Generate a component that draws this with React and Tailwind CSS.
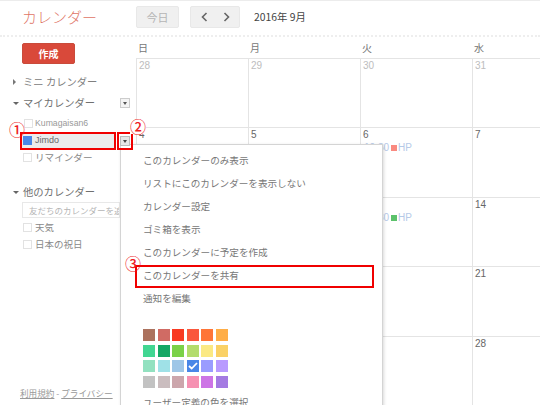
function Cell({ n, dim, children }) {
  return (
    <div className={`border-t border-l border-[#e4e4e4] pl-[2px] text-[10px] leading-[14px] font-['Liberation_Sans',sans-serif] ${dim ? "text-[#bdbdbd]" : "text-[#666]"}`}>
      {n}
      {children}
    </div>
  );
}

function Event({ color, time }) {
  return (
    <div className="flex items-center text-[10px] leading-[12px] text-[#b5c9e8] pl-[1px]">
      <span className="w-[27px]">{time}</span>
      <span className={`w-[6px] h-[6px] mr-[1px] ${color}`} />
      <span>HP</span>
    </div>
  );
}

function Box() {
  return <span className="w-[9px] h-[9px] border border-[#e2e2e2] shrink-0" />;
}

function Num({ n, className }) {
  return (
    <span className={`absolute text-[#ee1c25] text-[16px] leading-[15px] font-medium font-['Noto_Sans_CJK_JP',sans-serif] ${className}`}>{n}</span>
  );
}

const swatches = [
  ["bg-[#ac725e]", "bg-[#d06b64]", "bg-[#f83a22]", "bg-[#fa573c]", "bg-[#ff7537]", "bg-[#ffad46]"],
  ["bg-[#42d692]", "bg-[#16a765]", "bg-[#7bd148]", "bg-[#b3dc6c]", "bg-[#fbe983]", "bg-[#fad165]"],
  ["bg-[#92e1c0]", "bg-[#9fe1e7]", "bg-[#9fc6e7]", "bg-[#4986e7]", "bg-[#9a9cff]", "bg-[#b99aff]"],
  ["bg-[#c2c2c2]", "bg-[#cabdbf]", "bg-[#cca6ac]", "bg-[#f691b2]", "bg-[#cd74e6]", "bg-[#a47ae2]"],
];

const menu = ["このカレンダーのみ表示", "リストにこのカレンダーを表示しない", "カレンダー設定", "ゴミ箱を表示", "このカレンダーに予定を作成", "このカレンダーを共有", "通知を編集"];

export default function App() {
  return (
    <div className="relative w-[540px] h-[405px] overflow-hidden bg-white font-['Noto_Sans_CJK_JP','Liberation_Sans',sans-serif] text-[#777]">
      {/* header */}
      <div className="flex items-center h-[37px] border-t border-t-[#ececec] border-b-2 border-b-[#eeeeee] [border-bottom-style:dotted]">
        <div className="w-[136px] pl-[22px] text-[#e07566] text-[15px] font-light leading-[20px] -mt-[2px]">カレンダー</div>
        <div className="w-[43px] h-[22px] bg-[#f0f0f0] border border-[#e8e8e8] rounded-[2px] text-[#b5b5b5] text-[11px] flex items-center justify-center -mt-[2px]">今日</div>
        <div className="w-[50px] h-[22px] ml-[11px] bg-[#f0f0f0] border border-[#e8e8e8] rounded-[2px] flex items-center justify-center gap-[15px] -mt-[2px]">
          <svg width="7" height="10" viewBox="0 0 7 10" fill="none" stroke="#666" strokeWidth="1.6"><path d="M5.5 1 1.5 5l4 4" /></svg>
          <svg width="7" height="10" viewBox="0 0 7 10" fill="none" stroke="#666" strokeWidth="1.6"><path d="M1.5 1l4 4-4 4" /></svg>
        </div>
        <div className="ml-[14px] text-[10.4px] text-[#444] -mt-[2px]">2016年 9月</div>
      </div>

      <div className="flex h-[368px]">
        {/* sidebar */}
        <div className="relative w-[136px] shrink-0 text-[10.3px] leading-[16px]">
          <div className="ml-[22px] mt-[6px] w-[53px] h-[21px] bg-[#d9493a] border border-[#c94b3b] rounded-[2px] text-white text-[10px] font-bold flex items-center justify-center">作成</div>
          <div className="flex items-center mt-[10px] ml-[13px] text-[#808080]">
            <span className="w-0 h-0 border-y-[3px] border-y-transparent border-l-[3px] border-l-[#777] mr-[7px]" />ミニ カレンダー
          </div>
          <div className="flex items-center mt-[5px] ml-[13px] w-[117px] text-[#707070]">
            <span className="w-0 h-0 border-x-[3px] border-x-transparent border-t-[3px] border-t-[#666] mr-[4px]" />マイカレンダー
            <span className="ml-auto w-[10px] h-[10px] border border-[#ccc] bg-[#f4f4f4] flex items-center justify-center">
              <span className="w-0 h-0 border-x-[2.5px] border-x-transparent border-t-[3px] border-t-[#555]" />
            </span>
          </div>
          <div className="flex items-center gap-[2px] mt-[4px] ml-[24px] text-[8.7px] text-[#999] h-[16px] font-['Liberation_Sans',sans-serif]"><Box />Kumagaisan6</div>
          <div className="flex items-center gap-[3px] mt-[1px] ml-[21px] pl-[2px] w-[93px] h-[16px] bg-[#ececec] text-[9px] text-[#666] font-['Liberation_Sans',sans-serif]">
            <span className="w-[9px] h-[9px] bg-[#4986e7] shrink-0" />Jimdo
          </div>
          <div className="flex items-center gap-[3px] mt-[1px] ml-[23px] text-[9.6px] text-[#888] h-[16px]"><Box />リマインダー</div>
          <div className="flex items-center mt-[19px] ml-[13px] text-[#707070]">
            <span className="w-0 h-0 border-x-[3px] border-x-transparent border-t-[3px] border-t-[#666] mr-[4px]" />他のカレンダー
          </div>
          <div className="ml-[22px] mt-[2px] w-[98px] h-[16px] border border-[#e8e8e8] overflow-hidden whitespace-nowrap pl-[6px] text-[8.5px] leading-[14px] text-[#b5b5b5]">友だちのカレンダーを追加</div>
          <div className="flex items-center gap-[3px] mt-[1px] ml-[23px] text-[9.5px] text-[#888] h-[16px]"><Box />天気</div>
          <div className="flex items-center gap-[3px] mt-[1px] ml-[23px] text-[9.5px] text-[#888] h-[16px]"><Box />日本の祝日</div>
          <div className="absolute left-[20px] top-[350px] text-[8.6px] leading-[12px] text-[#999] whitespace-nowrap">
            <span className="underline">利用規約</span> - <span className="underline">プライバシー</span>
          </div>
        </div>

        {/* calendar */}
        <div className="flex-1 min-w-0 flex flex-col">
          <div className="grid grid-cols-[112px_112px_112px_68px] h-[21px] text-[10px] leading-[14px] text-[#777] pl-[2px] pt-[4px]">
            <span>日</span><span>月</span><span>火</span><span>水</span>
          </div>
          <div className="grid grid-cols-[112px_112px_112px_68px] grid-rows-[69.5px_69.5px_69.5px_69.5px_69.5px]">
            <Cell n="28" dim /><Cell n="29" dim /><Cell n="30" dim /><Cell n="31" dim />
            <Cell n="4" /><Cell n="5" /><Cell n="6"><Event color="bg-[#fa8a80]" time="10:30" /></Cell><Cell n="7" />
            <Cell n="11" /><Cell n="12" /><Cell n="13"><Event color="bg-[#5cc26b]" time="10:30" /></Cell><Cell n="14" />
            <Cell n="18" /><Cell n="19" /><Cell n="20" /><Cell n="21" />
            <Cell n="25" /><Cell n="26" /><Cell n="27" /><Cell n="28" />
          </div>
        </div>
      </div>

      {/* popup menu */}
      <div className="absolute left-[120px] top-[144px] w-[263px] h-[280px] bg-white border border-[#d4d4d4] shadow-[1px_1px_3px_rgba(0,0,0,0.15)] pt-[6px] text-[9.6px] text-[#777]">
        {menu.map((m) => (
          <div key={m} className="h-[23px] leading-[19px] pl-[22px] whitespace-nowrap">{m}</div>
        ))}
        <div className="mt-[17px] ml-[22px] grid grid-cols-[repeat(6,12px)] gap-x-[2.5px] gap-y-[3.7px]">
          {swatches.flat().map((c) => (
            <span key={c} className={`w-[12px] h-[12px] flex items-center justify-center ${c}`}>
              {c === "bg-[#4986e7]" && (
                <svg width="10" height="8" viewBox="0 0 10 8" fill="none" stroke="#fff" strokeWidth="1.8"><path d="M1 4l2.7 2.5L9 1" /></svg>
              )}
            </span>
          ))}
        </div>
        <div className="mt-[7px] pl-[22px] leading-[14px]">ユーザー定義の色を選択</div>
      </div>

      {/* annotations */}
      <div className="absolute left-[20px] top-[132px] w-[96px] h-[18px] border-2 border-[#f00000]" />
      <div className="absolute left-[117px] top-[132px] w-[16px] h-[18px] border-2 border-[#f00000] flex items-center justify-center">
        <span className="w-[10px] h-[10px] border border-[#bbb] bg-[#e6e6e6] flex items-center justify-center">
          <span className="w-0 h-0 border-x-[2.5px] border-x-transparent border-t-[3px] border-t-[#444]" />
        </span>
      </div>
      <div className="absolute left-[135px] top-[265px] w-[239px] h-[23px] border-2 border-[#f00000]" />
      <Num n="①" className="left-[9px] top-[122px]" />
      <Num n="②" className="left-[130px] top-[119px] bg-white w-[16px] h-[15px]" />
      <Num n="③" className="left-[125px] top-[256px]" />
    </div>
  );
}
